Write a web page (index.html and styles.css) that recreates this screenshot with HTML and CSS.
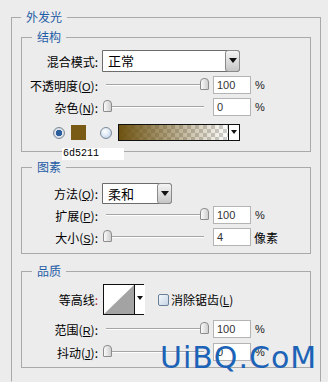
FILE: index.html
```html
<!DOCTYPE html>
<html lang="zh-CN">
<head>
  <meta charset="UTF-8">
  <title>外发光</title>
  <link rel="stylesheet" href="styles.css">
</head>
<body>
  <fieldset class="group">
    <legend>外发光</legend>

    <fieldset class="section section-struct">
      <legend>结构</legend>
      <div class="row row-select">
        <span class="label">混合模式:</span>
        <div class="select select-wide"><span>正常</span><i class="select-btn"></i></div>
      </div>
      <div class="row">
        <span class="label">不透明度(<u>O</u>):</span>
        <div class="slider"><div class="track"></div><div class="thumb" style="left: 98px"></div></div>
        <div class="num">100</div>
        <span class="unit">%</span>
      </div>
      <div class="row">
        <span class="label">杂色(<u>N</u>):</span>
        <div class="slider"><div class="track"></div><div class="thumb" style="left: 1px"></div></div>
        <div class="num">0</div>
        <span class="unit">%</span>
      </div>
      <div class="row row-color">
        <i class="radio radio-on"></i>
        <i class="swatch"></i>
        <i class="radio radio-off"></i>
        <div class="gradient"><div class="gradient-fill"></div><i class="drop"></i></div>
      </div>
      <div class="hex">6d5211</div>
    </fieldset>

    <fieldset class="section section-elem">
      <legend>图素</legend>
      <div class="row row-select">
        <span class="label">方法(<u>Q</u>):</span>
        <div class="select select-small"><span>柔和</span><i class="select-btn"></i></div>
      </div>
      <div class="row">
        <span class="label">扩展(<u>P</u>):</span>
        <div class="slider"><div class="track"></div><div class="thumb" style="left: 98px"></div></div>
        <div class="num">100</div>
        <span class="unit">%</span>
      </div>
      <div class="row">
        <span class="label">大小(<u>S</u>):</span>
        <div class="slider"><div class="track"></div><div class="thumb" style="left: 1px"></div></div>
        <div class="num">4</div>
        <span class="unit">像素</span>
      </div>
    </fieldset>

    <fieldset class="section section-quality">
      <legend>品质</legend>
      <div class="row row-contour">
        <span class="label">等高线<b>:</b></span>
        <div class="contour">
          <svg class="contour-pic" width="30" height="29" viewBox="0 0 30 29"><polygon points="0,29 30,0 30,29" fill="#a3a3a3"/></svg>
          <i class="drop"></i>
        </div>
        <i class="check"></i>
        <span class="check-label">消除锯齿(<u>L</u>)</span>
      </div>
      <div class="row">
        <span class="label">范围(<u>R</u>):</span>
        <div class="slider"><div class="track"></div><div class="thumb" style="left: 98px"></div></div>
        <div class="num">100</div>
        <span class="unit">%</span>
      </div>
      <div class="row">
        <span class="label">抖动(<u>J</u>):</span>
        <div class="slider"><div class="track"></div><div class="thumb" style="left: 1px"></div></div>
        <div class="num">0</div>
        <span class="unit">%</span>
      </div>
    </fieldset>
  </fieldset>

  <div class="watermark">UiBQ.CoM</div>
</body>
</html>
```

FILE: styles.css
```css
* {
  margin: 0;
  padding: 0;
  box-sizing: border-box;
}

body {
  position: relative;
  width: 328px;
  height: 382px;
  overflow: hidden;
  background: #ececec;
  color: #000;
  font-family: "Noto Sans CJK SC", sans-serif;
  font-size: 12px;
}

fieldset {
  border: 1px solid #a9a9a9;
}

legend {
  color: #1f5ca6;
  line-height: 16px;
  padding: 0 5px;
}

u {
  font-family: "Liberation Sans", sans-serif;
  font-size: 11px;
}

/* outer group */
.group {
  margin: 9px 0 0 11px;
  width: 310px;
  height: 373px;
  padding: 4px 9px 0;
  border-bottom-color: transparent;
}

.section {
  position: relative;
  padding: 0 10px 0 0;
}

.section legend {
  margin-left: 10px;
}

.section-struct {
  padding-top: 5px;
  padding-bottom: 10px;
}

.section-elem {
  margin-top: 7px;
  padding-top: 8px;
  padding-bottom: 7px;
}

.section-quality {
  margin-top: 9px;
  padding-top: 5px;
  padding-bottom: 6px;
}

/* rows */
.row {
  display: flex;
  align-items: center;
  height: 18px;
  margin-top: 4px;
}

.row:first-of-type {
  margin-top: 0;
}

.row-select {
  height: 22px;
}

.section-elem .row-select {
  height: 21px;
}

.section-elem .row-select + .row {
  margin-top: 2px;
}

.row-color {
  height: 17px;
  margin-top: 8px;
}

.row-contour {
  height: 31px;
}

.section-quality .row + .row {
  margin-top: 5px;
}

.label {
  flex: none;
  width: 76px;
  text-align: right;
  white-space: nowrap;
}

.label b {
  font-weight: normal;
  color: #b3262a;
}

/* dropdowns */
.select {
  display: flex;
  align-items: stretch;
  height: 100%;
  margin-left: 4px;
  background: #fff;
  border: 1px solid #6c6c6c;
  border-radius: 0 3px 3px 0;
}

.select span {
  flex: 1;
  padding-left: 5px;
  line-height: 19px;
  font-size: 13px;
}

.select-wide {
  width: 138px;
}

.select-small {
  width: 70px;
}

.select-btn {
  position: relative;
  width: 15px;
  margin: -1px -1px -1px 0;
  border: 1px solid #8a8a8a;
  border-radius: 3px;
  background: linear-gradient(#f4f4f4, #c6c6c6);
}

.select-btn::after {
  content: "";
  position: absolute;
  left: 3px;
  top: 7px;
  border-left: 4px solid transparent;
  border-right: 4px solid transparent;
  border-top: 5px solid #111;
}

/* sliders */
.slider {
  position: relative;
  flex: none;
  width: 108px;
  height: 100%;
  margin-left: 4px;
}

.track {
  position: absolute;
  left: 4px;
  right: 6px;
  top: 8px;
  height: 2px;
  border-top: 1px solid #a5a5a5;
  border-bottom: 1px solid #fdfdfd;
}

.thumb {
  position: absolute;
  top: 2px;
  width: 9px;
  height: 12px;
  border: 1px solid #8c8c8c;
  border-radius: 4px 4px 1px 1px;
  background: linear-gradient(90deg, #fafafa, #cfcfcf);
}

.num {
  flex: none;
  width: 38px;
  height: 100%;
  margin-left: 3px;
  padding-left: 3px;
  background: #fff;
  border: 1px solid #b4b4b4;
  color: #333;
  font-family: "Liberation Sans", sans-serif;
  font-size: 11px;
  line-height: 16px;
}

.unit {
  margin-left: 4px;
  color: #222;
  font-family: "Liberation Sans", "Noto Sans CJK SC", sans-serif;
  font-size: 11px;
}

.section-elem .row:last-child .unit {
  margin-left: 3px;
  font-size: 12px;
  color: #000;
}

/* colour row */
.radio {
  flex: none;
  width: 12px;
  height: 12px;
  border-radius: 50%;
  border: 1px solid #7d8a99;
}

.radio-on {
  margin-left: 31px;
  background: radial-gradient(circle, #2c5e9c 0 3px, #dfe6ee 3.5px, #b7c2cf 100%);
}

.radio-off {
  margin-left: 14px;
  background: radial-gradient(circle at 40% 35%, #fff 0, #dce8f5 50%, #a9bed6 100%);
}

.swatch {
  flex: none;
  width: 15px;
  height: 15px;
  margin-left: 6px;
  background: #7a5b16;
}

.gradient {
  display: flex;
  flex: none;
  width: 122px;
  height: 17px;
  margin-left: 6px;
  border: 1px solid #111;
  background-color: #fff;
  background-image:
    linear-gradient(45deg, #cfcfcf 25%, transparent 25%, transparent 75%, #cfcfcf 75%),
    linear-gradient(45deg, #cfcfcf 25%, transparent 25%, transparent 75%, #cfcfcf 75%);
  background-size: 8px 8px;
  background-position: 0 0, 4px 4px;
}

.gradient-fill {
  flex: 1;
  background: linear-gradient(90deg, #6d5211, rgba(109, 82, 17, 0));
}

.drop {
  position: relative;
  flex: none;
  width: 11px;
  background: #fff;
  border-left: 1px solid #111;
}

.drop::after {
  content: "";
  position: absolute;
  left: 2px;
  top: 5px;
  border-left: 3px solid transparent;
  border-right: 3px solid transparent;
  border-top: 4px solid #111;
}

.contour .drop::after {
  top: 11px;
}

/* hex value sits over the bottom border of the section */
.hex {
  position: absolute;
  left: 40px;
  top: 103px;
  width: 62px;
  height: 12px;
  padding-left: 1px;
  background: #fff;
  font-family: "Liberation Mono", monospace;
  font-size: 10px;
  line-height: 12px;
}

/* contour */
.contour {
  display: flex;
  flex: none;
  width: 41px;
  height: 31px;
  margin-left: 5px;
  border: 1px solid #111;
  background: #fff;
}

.contour-pic {
  display: block;
  flex: none;
}

.check {
  flex: none;
  width: 11px;
  height: 12px;
  margin-left: 14px;
  border: 1px solid #6b7f99;
  border-radius: 2px;
  background: linear-gradient(135deg, #f4f8fc, #c6d5e6);
}

.check-label {
  margin-left: 2px;
}

/* watermark over the panel */
.watermark {
  position: absolute;
  left: 160px;
  top: 343px;
  color: #1c63b7;
  font-family: "DejaVu Sans", sans-serif;
  font-size: 30px;
  line-height: 30px;
  letter-spacing: 1px;
}
```
